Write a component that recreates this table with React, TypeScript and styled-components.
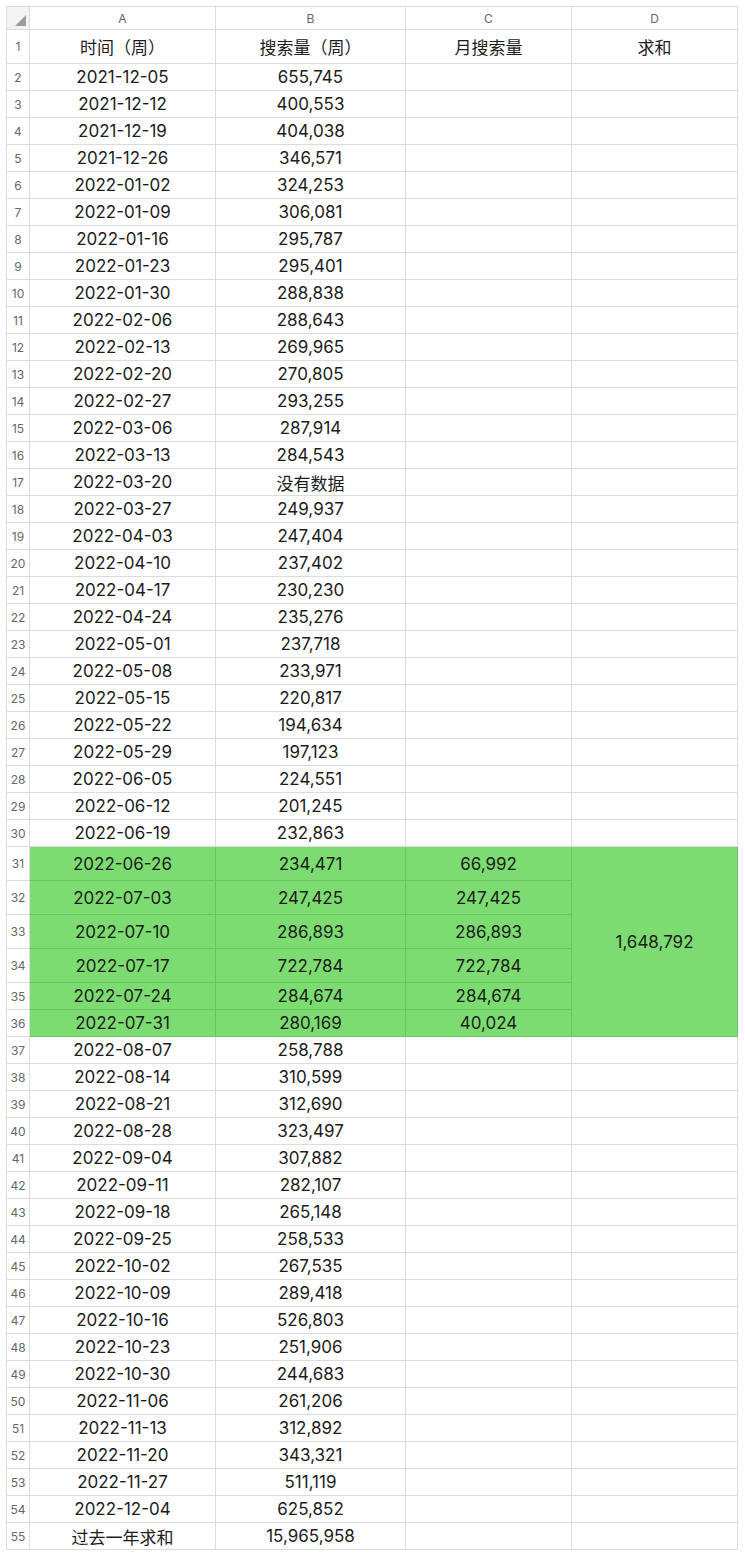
import React from 'react';
import styled, { createGlobalStyle } from 'styled-components';

type Row = { date: string; weekly: string; monthly?: string; tall?: boolean };

const rows: Row[] = [
    { date: '2021-12-05', weekly: '655,745' },
    { date: '2021-12-12', weekly: '400,553' },
    { date: '2021-12-19', weekly: '404,038' },
    { date: '2021-12-26', weekly: '346,571' },
    { date: '2022-01-02', weekly: '324,253' },
    { date: '2022-01-09', weekly: '306,081' },
    { date: '2022-01-16', weekly: '295,787' },
    { date: '2022-01-23', weekly: '295,401' },
    { date: '2022-01-30', weekly: '288,838' },
    { date: '2022-02-06', weekly: '288,643' },
    { date: '2022-02-13', weekly: '269,965' },
    { date: '2022-02-20', weekly: '270,805' },
    { date: '2022-02-27', weekly: '293,255' },
    { date: '2022-03-06', weekly: '287,914' },
    { date: '2022-03-13', weekly: '284,543' },
    { date: '2022-03-20', weekly: '没有数据' },
    { date: '2022-03-27', weekly: '249,937' },
    { date: '2022-04-03', weekly: '247,404' },
    { date: '2022-04-10', weekly: '237,402' },
    { date: '2022-04-17', weekly: '230,230' },
    { date: '2022-04-24', weekly: '235,276' },
    { date: '2022-05-01', weekly: '237,718' },
    { date: '2022-05-08', weekly: '233,971' },
    { date: '2022-05-15', weekly: '220,817' },
    { date: '2022-05-22', weekly: '194,634' },
    { date: '2022-05-29', weekly: '197,123' },
    { date: '2022-06-05', weekly: '224,551' },
    { date: '2022-06-12', weekly: '201,245' },
    { date: '2022-06-19', weekly: '232,863' },
    { date: '2022-06-26', weekly: '234,471', monthly: '66,992', tall: true },
    { date: '2022-07-03', weekly: '247,425', monthly: '247,425', tall: true },
    { date: '2022-07-10', weekly: '286,893', monthly: '286,893', tall: true },
    { date: '2022-07-17', weekly: '722,784', monthly: '722,784', tall: true },
    { date: '2022-07-24', weekly: '284,674', monthly: '284,674' },
    { date: '2022-07-31', weekly: '280,169', monthly: '40,024' },
    { date: '2022-08-07', weekly: '258,788' },
    { date: '2022-08-14', weekly: '310,599' },
    { date: '2022-08-21', weekly: '312,690' },
    { date: '2022-08-28', weekly: '323,497' },
    { date: '2022-09-04', weekly: '307,882' },
    { date: '2022-09-11', weekly: '282,107' },
    { date: '2022-09-18', weekly: '265,148' },
    { date: '2022-09-25', weekly: '258,533' },
    { date: '2022-10-02', weekly: '267,535' },
    { date: '2022-10-09', weekly: '289,418' },
    { date: '2022-10-16', weekly: '526,803' },
    { date: '2022-10-23', weekly: '251,906' },
    { date: '2022-10-30', weekly: '244,683' },
    { date: '2022-11-06', weekly: '261,206' },
    { date: '2022-11-13', weekly: '312,892' },
    { date: '2022-11-20', weekly: '343,321' },
    { date: '2022-11-27', weekly: '511,119' },
    { date: '2022-12-04', weekly: '625,852' },
    { date: '过去一年求和', weekly: '15,965,958' },
];

const GlobalStyle = createGlobalStyle`
    body {
        margin: 0;
        background: #ffffff;
        font-family: Inter, 'Noto Sans CJK SC', sans-serif;
    }
`;

export default function App() {
    return (
        <>
            <GlobalStyle />
            <Page>
                <Sheet>
                    <colgroup>
                        <col style={{ width: 23 }} />
                        <col style={{ width: 186 }} />
                        <col style={{ width: 190 }} />
                        <col style={{ width: 166 }} />
                        <col style={{ width: 166 }} />
                    </colgroup>
                    <tbody>
                        <HeadRow>
                            <Corner>
                                <Triangle />
                            </Corner>
                            <ColLabel>A</ColLabel>
                            <ColLabel>B</ColLabel>
                            <ColLabel>C</ColLabel>
                            <ColLabel>D</ColLabel>
                        </HeadRow>
                        <BodyRow $height={34}>
                            <RowNum>1</RowNum>
                            <Cell>时间（周）</Cell>
                            <Cell>搜索量（周）</Cell>
                            <Cell>月搜索量</Cell>
                            <Cell>求和</Cell>
                        </BodyRow>
                        {rows.map((r, i) => {
                            const n = i + 2;
                            const hot = r.monthly !== undefined;
                            return (
                                <BodyRow key={n} $height={r.tall ? 34 : 27}>
                                    <RowNum>{n}</RowNum>
                                    <Cell $hot={hot}>{r.date}</Cell>
                                    <Cell $hot={hot}>{r.weekly}</Cell>
                                    <Cell $hot={hot}>{r.monthly ?? ''}</Cell>
                                    {n === 31 && (
                                        <Cell $hot rowSpan={6}>
                                            1,648,792
                                        </Cell>
                                    )}
                                    {!hot && <Cell />}
                                </BodyRow>
                            );
                        })}
                    </tbody>
                </Sheet>
            </Page>
        </>
    );
}

const Page = styled.div`
    padding: 6px;
`;

const Sheet = styled.table`
    border-collapse: collapse;
    table-layout: fixed;
    width: 732px;
    border-right: 1px solid #c6c6c6;
    border-bottom: 1px solid #c6c6c6;
`;

const HeadRow = styled.tr`
    height: 23px;
`;

const Corner = styled.td`
    position: relative;
    background: #f3f3f3;
    border: 1px solid #dcdcdc;
    padding: 0;
`;

const Triangle = styled.div`
    position: absolute;
    right: 3px;
    bottom: 3px;
    width: 0;
    height: 0;
    border-left: 11px solid transparent;
    border-bottom: 11px solid #9c9c9c;
`;

const ColLabel = styled.td`
    border: 1px solid #dcdcdc;
    padding: 0;
    text-align: center;
    vertical-align: middle;
    font-size: 12px;
    color: #666666;
`;

const BodyRow = styled.tr<{ $height: number }>`
    height: ${(p) => p.$height}px;
`;

const RowNum = styled.td`
    border: 1px solid #dcdcdc;
    padding: 0;
    text-align: center;
    vertical-align: middle;
    font-size: 12px;
    color: #666666;
`;

const Cell = styled.td<{ $hot?: boolean }>`
    border: 1px solid ${(p) => (p.$hot ? '#68c45c' : '#dcdcdc')};
    background: ${(p) => (p.$hot ? '#7ddc71' : '#ffffff')};
    padding: 0;
    text-align: center;
    vertical-align: middle;
    font-size: 17px;
    color: #1c1c1c;
    white-space: nowrap;
`;
